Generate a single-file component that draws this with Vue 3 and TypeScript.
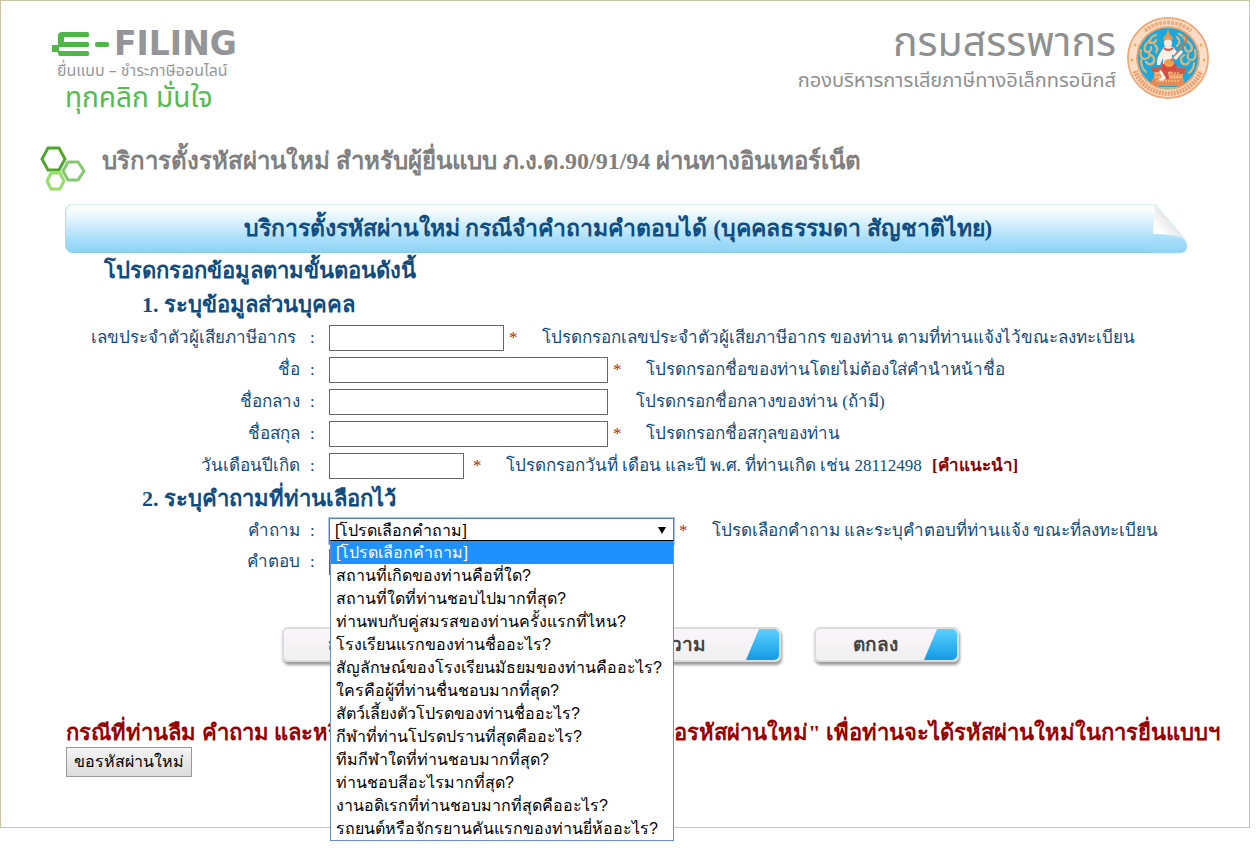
<script setup lang="ts">
import { ref } from 'vue'

interface Field {
  id: string
  label: string
  size: string
  required: boolean
  hint: string
  help?: string
}

const fields: Field[] = [
  { id: 'taxid', label: 'เลขประจำตัวผู้เสียภาษีอากร\u00a0', size: 'mid', required: true, hint: 'โปรดกรอกเลขประจำตัวผู้เสียภาษีอากร ของท่าน ตามที่ท่านแจ้งไว้ขณะลงทะเบียน' },
  { id: 'fname', label: 'ชื่อ', size: 'wide', required: true, hint: 'โปรดกรอกชื่อของท่านโดยไม่ต้องใส่คำนำหน้าชื่อ' },
  { id: 'mname', label: 'ชื่อกลาง', size: 'wide', required: false, hint: 'โปรดกรอกชื่อกลางของท่าน (ถ้ามี)' },
  { id: 'lname', label: 'ชื่อสกุล', size: 'wide', required: true, hint: 'โปรดกรอกชื่อสกุลของท่าน' },
  { id: 'birth', label: 'วันเดือนปีเกิด', size: 'short', required: true, hint: 'โปรดกรอกวันที่ เดือน และปี พ.ศ. ที่ท่านเกิด เช่น 28112498', help: '[คำแนะนำ]' },
]

const questions: string[] = [
  '[โปรดเลือกคำถาม]',
  'สถานที่เกิดของท่านคือที่ใด?',
  'สถานที่ใดที่ท่านชอบไปมากที่สุด?',
  'ท่านพบกับคู่สมรสของท่านครั้งแรกที่ไหน?',
  'โรงเรียนแรกของท่านชื่ออะไร?',
  'สัญลักษณ์ของโรงเรียนมัธยมของท่านคืออะไร?',
  'ใครคือผู้ที่ท่านชื่นชอบมากที่สุด?',
  'สัตว์เลี้ยงตัวโปรดของท่านชื่ออะไร?',
  'กีฬาที่ท่านโปรดปรานที่สุดคืออะไร?',
  'ทีมกีฬาใดที่ท่านชอบมากที่สุด?',
  'ท่านชอบสีอะไรมากที่สุด?',
  'งานอดิเรกที่ท่านชอบมากที่สุดคืออะไร?',
  'รถยนต์หรือจักรยานคันแรกของท่านยี่ห้ออะไร?',
]

const selected = ref<string>(questions[0])
</script>

<template>
  <div class="screen">
    <div class="page">
      <header class="top">
        <div class="brand">
          <div class="wordmark">
            <svg width="58" height="24" viewBox="0 0 58 24" aria-hidden="true">
              <g fill="#4db848">
                <path d="M10 0h26q1 0 1 2.500T36 5H12v5h24q1 0 1 2.500T36 15H7v4h29q1 0 1 2.500T36 24H8q-2 0-2-4H0v-7h6V4q0-4 4-4z" />
                <rect x="43" y="10" width="14" height="5" rx="2" />
              </g>
            </svg>
            <span class="filing">FILING</span>
          </div>
          <div class="tag">ยื่นแบบ – ชำระภาษีออนไลน์</div>
          <div class="motto">ทุกคลิก มั่นใจ</div>
        </div>
        <div class="dept">
          <div class="dept-text">
            <div class="dept-name">กรมสรรพากร</div>
            <div class="dept-sub">กองบริหารการเสียภาษีทางอิเล็กทรอนิกส์</div>
          </div>
          <svg class="seal" width="82" height="82" viewBox="0 0 82 82" aria-hidden="true">
            <circle cx="41" cy="41" r="40" fill="#fff6ee" stroke="#f2a877" stroke-width="2" />
            <circle cx="41" cy="41" r="35.500" fill="none" stroke="#fbdcc4" stroke-width="6" />
            <path d="M18 14A35.500 35.500 0 0 1 64 14" fill="none" stroke="#eea06c" stroke-width="4" stroke-dasharray="3 1" opacity=".8" />
            <path d="M8 54A35.500 35.500 0 0 0 74 54" fill="none" stroke="#ef9f6b" stroke-width="5" stroke-dasharray="2 1" />
            <circle cx="8" cy="28" r="1.500" fill="#f0b060" />
            <circle cx="74" cy="28" r="1.500" fill="#f0b060" />
            <circle cx="5" cy="43" r="1.500" fill="#f0b060" />
            <circle cx="77" cy="43" r="1.500" fill="#f0b060" />
            <circle cx="41" cy="41" r="31" fill="#1ba8dc" stroke="#f2a36d" stroke-width="2" />
            <g fill="none" stroke="#e2b474" stroke-width="2.200" stroke-linecap="round">
              <path d="M29 18q-7 2-6 8 5 1 6-3M22 24q-7 6-3 11 6 0 5-5M14 33q-2 9 4 9 6-1 4-6M14 43q0 8 5 12M24 38q5 3 2 8-4 3-7-1M28 28q4 3 1 7" />
              <path d="M52 17q7 3 6 8M60 24q7 5 4 10-6 2-6-4M68 33q2 9-3 10-6 0-4-6M67 46q0 6-5 10M57 38q-5 3-2 8 4 3 7-1M50 20q5 5 0 9" />
            </g>
            <path d="M24 66l2-5h30l2 5-4 3H28z" fill="#e58a52" />
            <path d="M27 50h29v12H27z" fill="#eb9b65" />
            <path d="M24 51q8-3 15 0l-2 4H26zM45 52q8-4 15 0l-3 5H44z" fill="#c95f4b" />
            <path d="M29 56h24M28 60h26M29 64h24" stroke="#ffd69c" stroke-width="1" stroke-dasharray="2 1" />
            <path d="M30 70h22l-5 2H35z" fill="#b8bd83" />
            <path d="M35 46q8-3 15 2l-1 5-8 2 1 7h-4l-3-9z" fill="#d94b43" />
            <path d="M37 30q4-2 9 0l4 5-3 4-2-2v10H36v-6l-3 7h-3q-1-6 3-12z" fill="#fff0e8" />
            <path d="M34 53l5 8-3 3-5-1 4-3-3-6z" fill="#fff0e8" />
            <ellipse cx="42" cy="46" rx="5" ry="4" fill="#f2a14c" />
            <path d="M44 44L60 22q0-4-4-3" fill="none" stroke="#c8794b" stroke-width="2" />
            <path d="M46 41l8-8 2 2-7 8z" fill="#fff0e8" />
            <ellipse cx="41" cy="26" rx="4" ry="5" fill="#ffe9dc" />
            <path d="M37 24q-2-4 2-6l2-6 2 6q4 2 2 6-4-3-8 0z" fill="#e79a58" />
            <path d="M37 31q4 4 9 0" fill="none" stroke="#e5543f" stroke-width="2" />
          </svg>
        </div>
      </header>

      <div class="heading">
        <svg width="48" height="46" viewBox="0 0 48 46" fill="none" stroke-width="3" aria-hidden="true">
          <path d="M9 3h11l6 11-6 11H9L3 14z" stroke="#4fa72b" />
          <path d="M29 17h10l6 9-6 9H29l-5-9z" stroke="#85c870" />
          <path d="M12 28h9l4 8-4 8h-9l-4-8z" stroke="#97dd6d" />
        </svg>
        <h1>บริการตั้งรหัสผ่านใหม่ สำหรับผู้ยื่นแบบ ภ.ง.ด.90/91/94 ผ่านทางอินเทอร์เน็ต</h1>
      </div>

      <div class="banner">
        <h2>บริการตั้งรหัสผ่านใหม่ กรณีจำคำถามคำตอบได้ (บุคคลธรรมดา สัญชาติไทย)</h2>
        <svg width="36" height="49" viewBox="0 0 36 49" aria-hidden="true">
          <defs>
            <linearGradient id="sheet" x1="0" y1="0" x2="0" y2="1">
              <stop offset="0" stop-color="#d9f1f3" />
              <stop offset=".04" stop-color="#fcfeff" />
              <stop offset=".15" stop-color="#f6fcff" />
              <stop offset=".75" stop-color="#a3dcf8" />
              <stop offset="1" stop-color="#8fd4f5" />
            </linearGradient>
            <linearGradient id="curl" x1="0" y1="1" x2=".7" y2=".3">
              <stop offset=".3" stop-color="#ffffff" />
              <stop offset="1" stop-color="#dcdcdc" />
            </linearGradient>
          </defs>
          <path d="M0 0h4l28 33q4 5 4 9 0 7-7 7H0z" fill="url(#sheet)" />
          <path d="M4 1l29 34q-8-5-31-5z" fill="url(#curl)" />
          <path d="M4 0l28 33" stroke="#cfeef0" fill="none" />
        </svg>
      </div>

      <form @submit.prevent>
        <h3 class="lead">โปรดกรอกข้อมูลตามขั้นตอนดังนี้</h3>
        <h3 class="step">1. ระบุข้อมูลส่วนบุคคล</h3>
        <div v-for="f in fields" :key="f.id" class="row" :class="f.size">
          <label :for="f.id">{{ f.label }}</label>
          <span class="colon">:</span>
          <input :id="f.id" type="text" />
          <span v-if="f.required" class="star">*</span>
          <span class="hint" :class="{ free: !f.required }">{{ f.hint }}</span>
          <a v-if="f.help" class="help" href="#">{{ f.help }}</a>
        </div>
        <h3 class="step">2. ระบุคำถามที่ท่านเลือกไว้</h3>
        <div class="row ask">
          <label for="question">คำถาม</label>
          <span class="colon">:</span>
          <div class="picker">
            <select id="question" v-model="selected">
              <option v-for="q in questions" :key="q">{{ q }}</option>
            </select>
            <svg class="arrow" width="8" height="7" viewBox="0 0 8 7" aria-hidden="true"><path d="M0 0h8L4 7z" /></svg>
            <ul class="menu" role="listbox" aria-label="คำถาม">
              <li v-for="q in questions" :key="q" role="option" :aria-selected="q === selected" :class="{ on: q === selected }" @click="selected = q">{{ q }}</li>
            </ul>
          </div>
          <span class="star">*</span>
          <span class="hint">โปรดเลือกคำถาม และระบุคำตอบที่ท่านแจ้ง ขณะที่ลงทะเบียน</span>
        </div>
        <div class="row wide">
          <label for="answer">คำตอบ</label>
          <span class="colon">:</span>
          <input id="answer" type="text" />
        </div>
        <div class="actions">
          <button type="button" class="pill long">สร้างรหัสผ่าน</button>
          <button type="reset" class="pill clear">ลบข้อความ</button>
          <button type="submit" class="pill">ตกลง</button>
        </div>
      </form>

      <p class="notice">
        <span>กรณีที่ท่านลืม คำถาม และหรือ</span>
        <span>"ขอรหัสผ่านใหม่" เพื่อท่านจะได้รหัสผ่านใหม่ในการยื่นแบบฯ</span>
      </p>
      <button type="button" class="renew">ขอรหัสผ่านใหม่</button>
    </div>
  </div>
</template>

<style>
body {
  background: #fff;
}
</style>

<style scoped>
.screen {
  padding: 0 6px 20px 0;
}
.page {
  padding-bottom: 50px;
  border: 1px solid #cdc4a8;
  font: 17px/24px 'Liberation Serif', serif;
  color: #0f4c81;
  white-space: nowrap;
}
h1, h2, h3, p, ul {
  margin: 0;
  padding: 0;
}
.top {
  display: flex;
  justify-content: space-between;
  height: 144px;
  padding: 0 40px 0 51px;
}
.brand {
  padding-top: 30px;
}
.wordmark {
  display: flex;
  align-items: center;
  gap: 4px;
  height: 26px;
}
.filing {
  font: bold 33px/26px 'DejaVu Sans', sans-serif;
  color: #939598;
}
.tag {
  padding-left: 5px;
  font: 16px/28px 'Noto Sans Thai', 'Noto Sans', sans-serif;
  color: #97999b;
}
.motto {
  padding-left: 13px;
  font: 28px/28px 'Noto Sans Thai', 'Noto Sans', sans-serif;
  color: #55bb50;
}
.dept {
  display: flex;
  gap: 11px;
  padding-top: 16px;
}
.dept-text {
  text-align: right;
  font-family: 'Noto Sans Thai', 'Noto Sans', sans-serif;
  color: #8e9092;
}
.dept-name {
  font-size: 41px;
  line-height: 52px;
}
.dept-sub {
  font-size: 20px;
  line-height: 24px;
}
.heading {
  display: flex;
  align-items: flex-start;
  gap: 15px;
  height: 59px;
  padding-left: 38px;
}
h1 {
  font-size: 24px;
  line-height: 32px;
  color: #808080;
}
.banner {
  display: flex;
  margin: 0 62px 0 64px;
}
h2 {
  flex: 1;
  box-sizing: border-box;
  height: 49px;
  padding-left: 20px;
  border-radius: 8px 0 0 8px;
  background: linear-gradient(#d9f1f3 0, #fcfeff 2px, #f6fcff 15%, #a3dcf8 75%, #8fd4f5 97%, #86c4df 100%);
  box-shadow: inset 1px 0 1px #a9dbe8;
  font-size: 23px;
  line-height: 50px;
  text-align: center;
}
h3 {
  font-size: 22px;
  line-height: 34px;
}
.lead {
  padding: 1px 0 0 103px;
}
.step {
  padding-left: 141px;
}
.row {
  display: flex;
  align-items: center;
  height: 32px;
}
.row.ask {
  height: 30px;
}
.row label {
  width: 299px;
  text-align: right;
}
.colon {
  box-sizing: border-box;
  width: 29px;
  padding-left: 10px;
}
input {
  box-sizing: border-box;
  height: 26px;
  margin: 0;
  padding: 0 4px;
  border: 1px solid #666;
  font: inherit;
}
.mid input {
  width: 175px;
}
.wide input {
  width: 279px;
}
.short input {
  width: 135px;
}
.star {
  margin-left: 5px;
  color: #a52a2a;
}
.short .star {
  margin-left: 9px;
}
.hint {
  margin-left: 24px;
}
.hint.free {
  margin-left: 28px;
}
.help {
  margin-left: 10px;
  font-weight: bold;
  color: #8b0000;
  text-decoration: none;
}
.picker {
  position: relative;
  width: 345px;
}
select {
  display: block;
  box-sizing: border-box;
  width: 100%;
  height: 26px;
  margin: 0;
  padding: 0 5px;
  appearance: none;
  border: 1px solid #4a80d0;
  border-radius: 0;
  outline: 1px solid #a9c6f5;
  background: #fff;
  font: 16px/24px 'Liberation Sans', sans-serif;
  color: #000;
}
.arrow {
  position: absolute;
  top: 9px;
  right: 8px;
  pointer-events: none;
}
.menu {
  position: absolute;
  z-index: 2;
  top: 22px;
  left: 1px;
  right: 0;
  border: 1px solid #6a8fcb;
  border-top-color: #000;
  background: #fff;
  font: 16px/23px 'Liberation Sans', sans-serif;
  color: #000;
  list-style: none;
}
.menu li {
  height: 23px;
  padding-left: 5px;
}
.menu .on {
  background: #1e90ff;
  color: #fff;
}
.actions {
  display: flex;
  gap: 33px;
  padding: 49px 0 0 281px;
}
.pill {
  position: relative;
  box-sizing: border-box;
  width: 145px;
  height: 35px;
  padding: 0 0 0 37px;
  border: 2px solid #dcdcde;
  border-radius: 6px;
  background: linear-gradient(#fbf5fb, #f0eff1);
  box-shadow: 1px 3px 3px #999;
  font: bold 19px/28px 'Liberation Sans', sans-serif;
  color: #444;
  text-align: left;
}
.pill::after {
  content: '';
  position: absolute;
  top: 0;
  right: 0;
  bottom: 0;
  width: 33px;
  border-radius: 0 5px 5px 0;
  background: linear-gradient(#5dd0ff, #119ae6);
  clip-path: polygon(13px 0, 100% 0, 100% 100%, 0 100%);
}
.pill.long {
  width: 256px;
  padding-left: 44px;
}
.pill.clear {
  width: 210px;
}
.notice {
  display: flex;
  justify-content: space-between;
  margin-top: 57px;
  padding: 0 29px 0 65px;
  font-size: 22px;
  font-weight: bold;
  line-height: 28px;
  color: #990000;
}
.renew {
  height: 30px;
  margin: 0 0 0 65px;
  padding: 0 7px;
  border: 1px solid #999;
  border-radius: 0;
  background: linear-gradient(#f4f4f4, #dcdcdc);
  font: 16px/24px 'Liberation Sans', sans-serif;
  color: #000;
}
</style>
